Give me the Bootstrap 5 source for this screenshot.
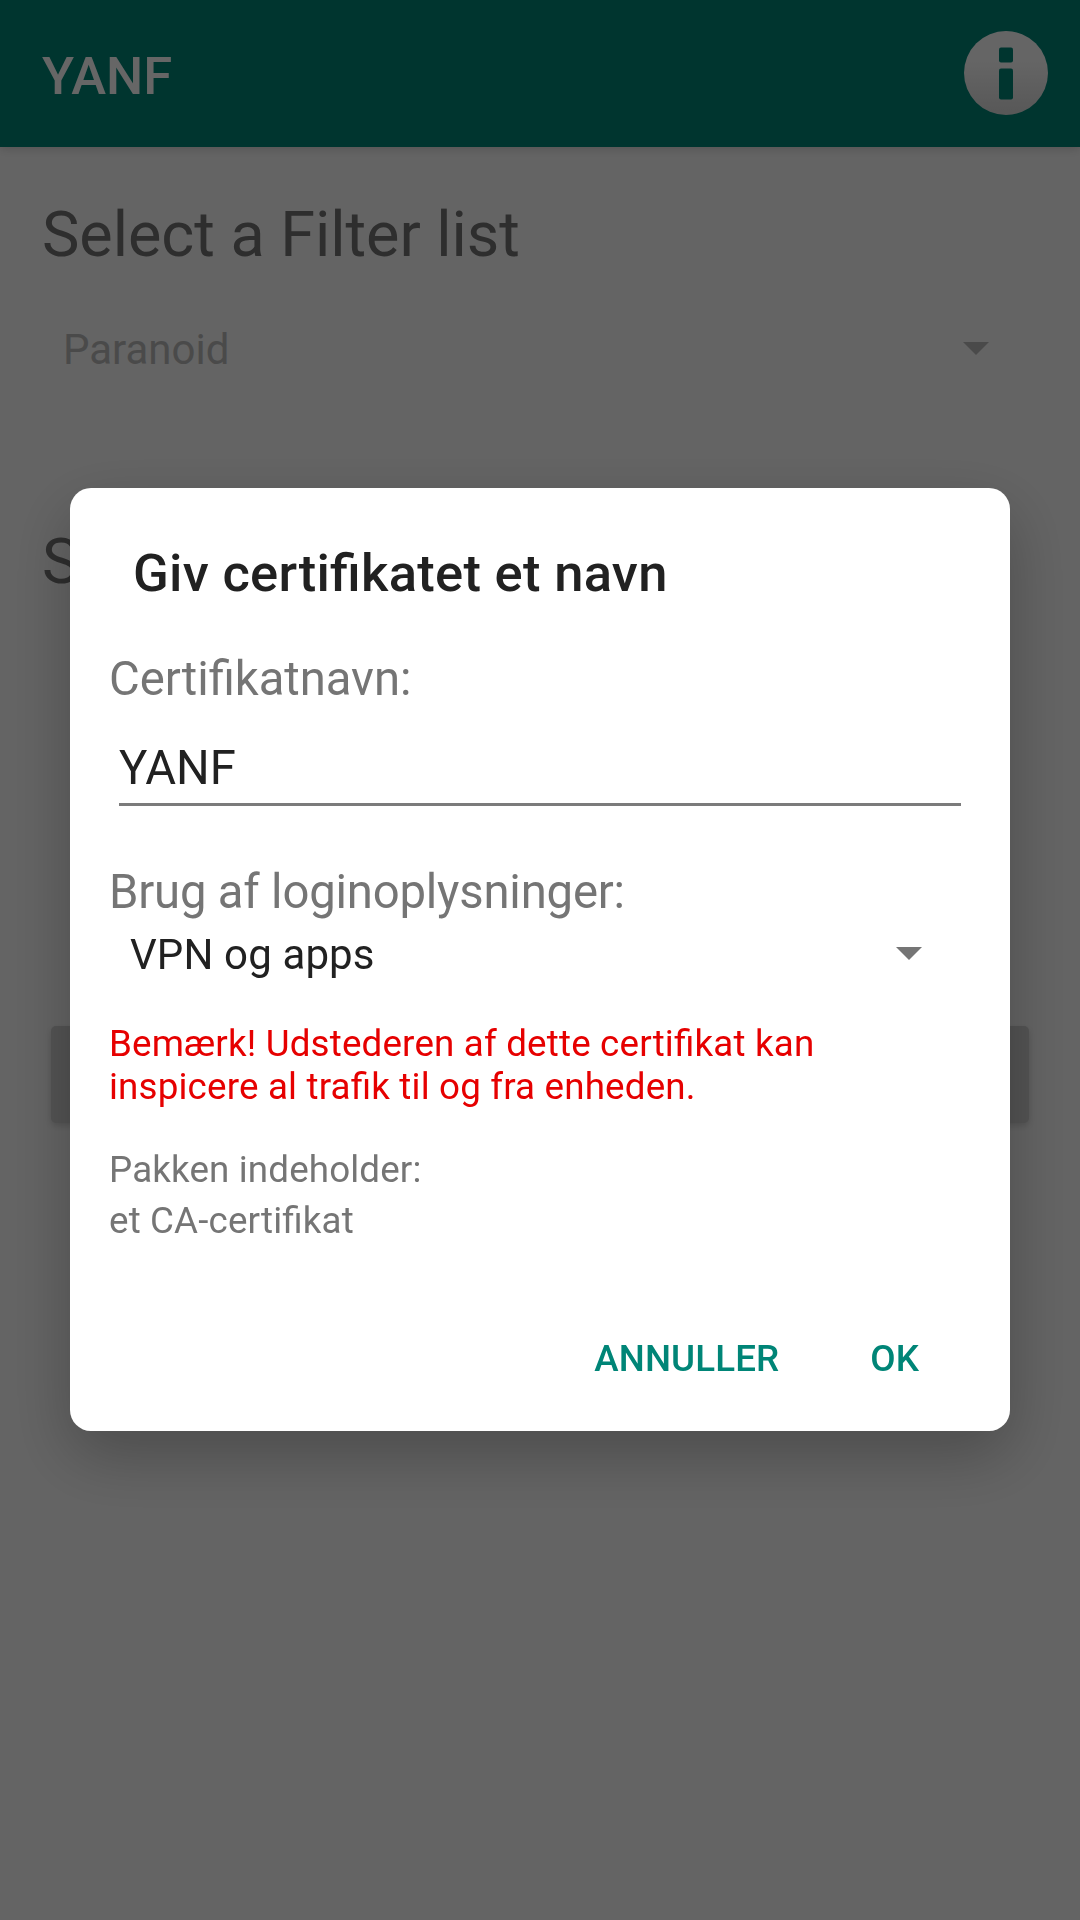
<!DOCTYPE html>
<html lang="da">
<head>
<meta charset="utf-8">
<meta name="viewport" content="width=device-width, initial-scale=1">
<title>YANF</title>
<link rel="stylesheet" href="https://cdn.jsdelivr.net/npm/bootstrap@5.3.0/dist/css/bootstrap.min.css">
<style>
body { font-family: Roboto, "Noto Sans", sans-serif; font-feature-settings: "liga" 1; background: #fafafa; height: 1920px; overflow: hidden; }
.app-bar { height: 147px; padding: 0 32px 0 42px; background: #008577; box-shadow: 0 2px 9px rgba(0,0,0,.16); }
.app-bar svg { margin-bottom: 2px; }
.app-name { font-size: 52.5px; line-height: 70px; font-weight: 500; color: #fff; padding-top: 4px; }
.app-main { padding: 46px 42px 0; }
.section-title { font-size: 63px; line-height: 84px; font-weight: 400; letter-spacing: -.05px; color: #737373; }
.filter-select { margin: 45px 49px 142px 21px; font-size: 42px; line-height: 56px; color: #b9b9b9; }
.filter-select svg, .usage-select svg { margin-bottom: 3px; }
.start-btn { margin: 422px 9px 0; height: 97px; border-radius: 5px; background: #d0d0d0; box-shadow: 0 3px 7px rgba(0,0,0,.16); }
.modal-backdrop { background: #000; opacity: .6; width: 100%; height: 100%; }
.cert-dialog { max-width: none; width: 940px; margin: 488px auto 0; }
.cert-box { height: 943px; border: 0; border-radius: 21px; box-shadow: 0 24px 64px rgba(0,0,0,.25); }
.cert-title { padding: 50px 63px 0; font-size: 52.5px; line-height: 70px; font-weight: 500; letter-spacing: .29px; color: #212121; }
.cert-body { padding: 41px 39px 0; color: #757575; }
.field-label { font-size: 47.25px; line-height: 60px; letter-spacing: -.05px; }
.usage-label { letter-spacing: -.19px; }
.cert-input, .cert-input:focus { width: 842px; height: 69px; margin: 28px 0 56px 10px; padding: 1px 0 5px; border: 0; border-bottom: 3px solid #7b7b7b; border-radius: 0; font-size: 47.25px; line-height: 60px; color: #212121; }
.usage-select { margin: 5px 49px 39px 21px; font-size: 42px; line-height: 56px; letter-spacing: .12px; color: #212121; }
.warning-text { font-size: 36.75px; line-height: 43px; letter-spacing: .17px; color: #e60000; }
.package-text { margin-top: 36px; font-size: 36.75px; line-height: 51px; letter-spacing: .14px; }
.cert-actions { padding: 0 91px 51px 0; gap: 91px; }
.action-btn { padding: 0; border: 0; font-size: 36.75px; line-height: 43px; font-weight: 500; letter-spacing: .1px; color: #008577; }
</style>
</head>
<body>
<header class="app-bar d-flex align-items-center justify-content-between position-relative">
  <div class="app-name">YANF</div>
  <svg width="84" height="84" viewBox="0 0 84 84" aria-hidden="true">
    <defs><linearGradient id="disc" x1="0" y1="0" x2="0" y2="1"><stop offset=".35" stop-color="#fdfdfd"/><stop offset="1" stop-color="#dadada"/></linearGradient></defs>
    <circle cx="42" cy="42" r="42" fill="url(#disc)"/>
    <rect x="35" y="16.5" width="14" height="15" rx="2" fill="#008577"/>
    <rect x="35" y="37.5" width="14" height="31" rx="2" fill="#008577"/>
  </svg>
</header>
<main class="app-main">
  <h1 class="section-title mb-0">Select a Filter list</h1>
  <div class="filter-select d-flex align-items-center justify-content-between">
    <span>Paranoid</span>
    <svg width="26" height="13" viewBox="0 0 26 13" aria-hidden="true"><path d="M0 0H26L13 13Z" fill="#b9b9b9"/></svg>
  </div>
  <h2 class="section-title mb-0">S</h2>
  <div class="start-btn"></div>
</main>

<div class="modal-backdrop"></div>
<div class="modal d-block overflow-hidden" role="dialog" aria-modal="true">
  <div class="modal-dialog cert-dialog">
    <div class="modal-content cert-box">
      <div class="cert-title">Giv certifikatet et navn</div>
      <div class="cert-body flex-grow-1">
        <div class="field-label">Certifikatnavn:</div>
        <input class="form-control cert-input" type="text" value="YANF" aria-label="Certifikatnavn">
        <div class="field-label usage-label">Brug af loginoplysninger:</div>
        <div class="usage-select d-flex align-items-center justify-content-between">
          <span>VPN og apps</span>
          <svg width="26" height="13" viewBox="0 0 26 13" aria-hidden="true"><path d="M0 0H26L13 13Z" fill="#757575"/></svg>
        </div>
        <div class="warning-text">Bemærk! Udstederen af dette certifikat kan<br>inspicere al trafik til og fra enheden.</div>
        <div class="package-text">Pakken indeholder:<br>et CA-certifikat</div>
      </div>
      <div class="cert-actions d-flex justify-content-end">
        <button class="btn action-btn" type="button">ANNULLER</button>
        <button class="btn action-btn" type="button">OK</button>
      </div>
    </div>
  </div>
</div>
<script src="https://cdn.jsdelivr.net/npm/bootstrap@5.3.0/dist/js/bootstrap.bundle.min.js"></script>
</body>
</html>
